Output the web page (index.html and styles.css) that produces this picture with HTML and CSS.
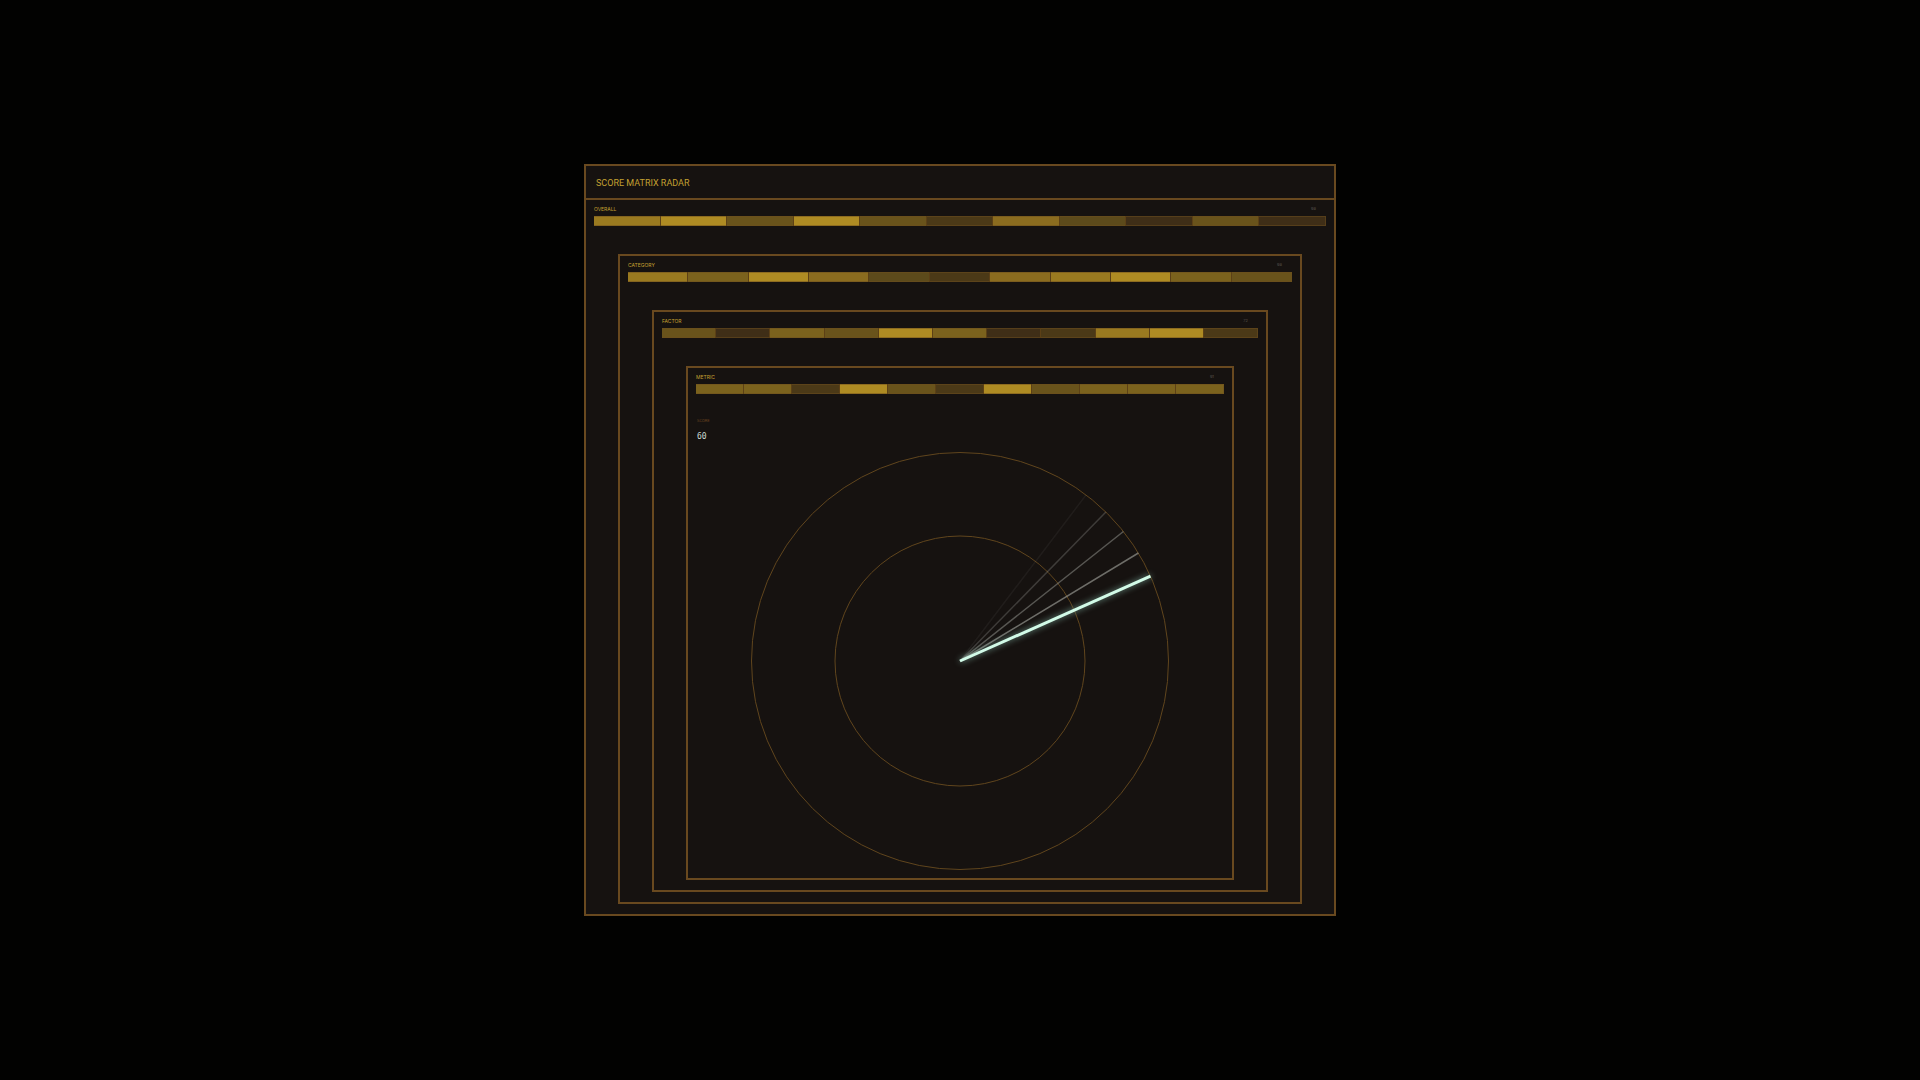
FILE: index.html
```html
<!DOCTYPE html>
<html lang="en">
<head>
<meta charset="utf-8">
<meta name="viewport" content="width=device-width, initial-scale=1">
<title>Score Matrix Radar</title>
<link rel="stylesheet" href="styles.css">
</head>
<body>
<main class="panel">
  <header class="panel-header"><h1 class="title">SCORE MATRIX RADAR</h1></header>
  <section class="level">
    <div class="level-head">
      <div class="caption"><h2 class="name">OVERALL</h2><span class="value">98</span></div>
      <div class="bar"><i class="s7"></i><i class="s8"></i><i class="s4"></i><i class="s8"></i><i class="s4"></i><i class="s2"></i><i class="s6"></i><i class="s3"></i><i class="s1"></i><i class="s4"></i><i class="s1"></i></div>
    </div>
    <section class="level nested">
      <div class="level-head">
        <div class="caption"><h2 class="name">CATEGORY</h2><span class="value">98</span></div>
        <div class="bar"><i class="s7"></i><i class="s5"></i><i class="s8"></i><i class="s6"></i><i class="s3"></i><i class="s2"></i><i class="s6"></i><i class="s7"></i><i class="s8"></i><i class="s5"></i><i class="s4"></i></div>
      </div>
      <section class="level nested">
        <div class="level-head">
          <div class="caption"><h2 class="name">FACTOR</h2><span class="value">72</span></div>
          <div class="bar"><i class="s4"></i><i class="s1"></i><i class="s5"></i><i class="s4"></i><i class="s8"></i><i class="s5"></i><i class="s1"></i><i class="s2"></i><i class="s7"></i><i class="s8"></i><i class="s2"></i></div>
        </div>
        <section class="level nested">
          <div class="level-head">
            <div class="caption"><h2 class="name">METRIC</h2><span class="value">91</span></div>
            <div class="bar"><i class="s5"></i><i class="s5"></i><i class="s2"></i><i class="s8"></i><i class="s4"></i><i class="s2"></i><i class="s8"></i><i class="s4"></i><i class="s5"></i><i class="s5"></i><i class="s5"></i></div>
          </div>
          <div class="score"><span class="score-label">SCORE</span><strong class="score-value">60</strong></div>
          <svg class="radar" viewBox="0 0 434 434" role="img" aria-label="Radar sweep">
            <circle class="ring" cx="217" cy="217" r="208.5"/>
            <circle class="ring" cx="217" cy="217" r="125"/>
            <path class="trail t4" d="M217 217L343.1 50.9"/>
            <path class="trail t3" d="M217 217L362.9 68"/>
            <path class="trail t2" d="M217 217L380.4 87.5"/>
            <path class="trail t1" d="M217 217L395.4 109"/>
            <path class="sweep" d="M217 217L407.5 132.2"/>
          </svg>
        </section>
      </section>
    </section>
  </section>
</main>
</body>
</html>
```
FILE: styles.css
```css
* { box-sizing: border-box; }

body {
  margin: 0;
  min-height: 100vh;
  display: grid;
  place-items: center;
  background: #020201;
  color: #c4a030;
  font-family: Roboto, "Liberation Sans", sans-serif;
}

.panel {
  width: min(752px, 100vw - 32px);
  aspect-ratio: 1;
  display: flex;
  flex-direction: column;
  border: 2px solid #69491f;
  background: #161210;
}

.panel-header {
  display: flex;
  align-items: center;
  height: 34px;
  padding: 2px 10px 0;
  border-bottom: 2px solid #69491f;
}

.title {
  margin: 0;
  font-size: 9px;
  line-height: 12px;
  font-weight: 400;
}

.level {
  flex: 1;
  min-height: 0;
  display: flex;
  flex-direction: column;
}

.nested {
  margin: 28px 32px 10px;
  border: 2px solid #69491f;
}

.level-head {
  display: flex;
  flex-direction: column;
  gap: 4px;
  padding: 6px 8px 0;
}

.caption {
  display: flex;
  justify-content: space-between;
  align-items: center;
  height: 6px;
  padding-right: 10px;
  font-family: Inter, Roboto, sans-serif;
}

.name {
  margin: 0;
  font-size: 5px;
  line-height: 6px;
  font-weight: 400;
}

.value {
  color: #5c554e;
  font-size: 4px;
  line-height: 6px;
}

.bar {
  display: flex;
  gap: 1px;
  height: 10px;
  background: #5c4016;
}

.bar i {
  flex: 1;
  border: solid rgb(110 78 30 / 50%);
  border-width: 1px 0;
}

.bar i:last-child { border-right-width: 1px; }

.s1 { background: #3f2e17; }
.s2 { background: #4b3917; }
.s3 { background: #5c4a1b; }
.s4 { background: #69531b; }
.s5 { background: #7b621d; }
.s6 { background: #8b6c1f; }
.s7 { background: #9a7a20; }
.s8 { background: #ae8b23; }

.score {
  display: flex;
  flex-direction: column;
  gap: 8px;
  padding: 24px 9px 2px;
}

.score-label {
  color: #6b421f;
  font-size: 4px;
  line-height: 6px;
}

.score-value {
  color: #c9dbd2;
  font-family: "DejaVu Sans Mono", monospace;
  font-size: 8px;
  line-height: 10px;
  font-weight: 400;
}

.radar {
  flex: 1;
  min-height: 0;
  width: 100%;
  overflow: visible;
  fill: none;
}

.ring { stroke: #60451d; stroke-width: 1; }

.trail { stroke: #a9aaa4; stroke-width: 1.5; }
.t1 { opacity: 0.6; }
.t2 { opacity: 0.45; }
.t3 { opacity: 0.28; }
.t4 { opacity: 0.08; }

.sweep {
  stroke: #d2fbe8;
  stroke-width: 3;
  filter: drop-shadow(0 0 3px #77a395);
}
```
